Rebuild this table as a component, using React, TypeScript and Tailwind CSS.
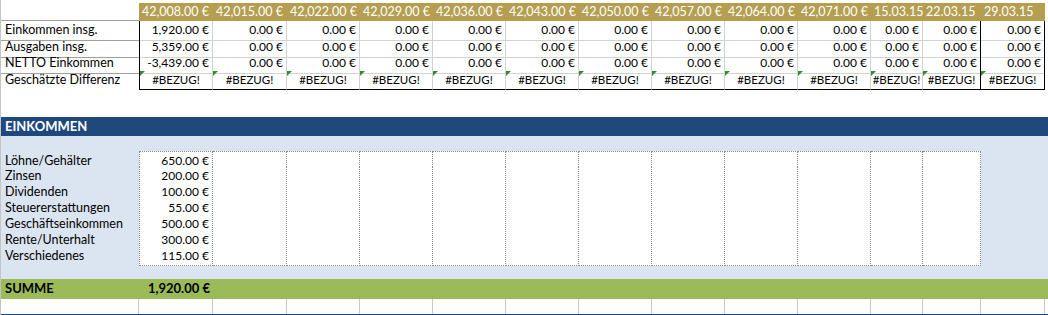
import React from "react";

const COLS =
  "grid grid-cols-[138px_74px_74px_73px_73px_73px_73px_73px_73px_73px_73px_52px_58px_64px]";

const headers = [
  "42,008.00 €",
  "42,015.00 €",
  "42,022.00 €",
  "42,029.00 €",
  "42,036.00 €",
  "42,043.00 €",
  "42,050.00 €",
  "42,057.00 €",
  "42,064.00 €",
  "42,071.00 €",
  "15.03.15",
  "22.03.15",
  "29.03.15",
];

const summary = [
  { label: "Einkommen insg.", first: "1,920.00 €", h: "h-[17px]" },
  { label: "Ausgaben insg.", first: "5,359.00 €", h: "h-[16px]" },
  { label: "NETTO Einkommen", first: "-3,439.00 €", h: "h-[17px]" },
];

const income = [
  ["Löhne/Gehälter", "650.00 €"],
  ["Zinsen", "200.00 €"],
  ["Dividenden", "100.00 €"],
  ["Steuererstattungen", "55.00 €"],
  ["Geschäftseinkommen", "500.00 €"],
  ["Rente/Unterhalt", "300.00 €"],
  ["Verschiedenes", "115.00 €"],
];

const Triangle = () => (
  <span className="absolute top-0 left-0 w-0 h-0 border-t-[5px] border-t-[#2f8f2f] border-r-[5px] border-r-transparent" />
);

export default function App() {
  return (
    <div className="w-[1048px] h-[315px] overflow-hidden bg-white border-l border-[#c4c4c4] font-['Lato',sans-serif] text-[12.5px] text-black">
      <div className="h-[3px]" />

      {/* date header */}
      <div className={`${COLS} h-[18px]`}>
        <div className="border-b border-[#a0a0a0]" />
        {headers.map((h) => (
          <div
            key={h}
            className="bg-[#b59e50] text-white text-[12.5px] leading-[18px] pl-[3px] whitespace-nowrap overflow-hidden"
          >
            {h}
          </div>
        ))}
      </div>

      {/* summary rows */}
      {summary.map((row) => (
        <div key={row.label} className={`${COLS} ${row.h}`}>
          <div className="border-b border-[#a0a0a0] pl-[4px] flex items-center whitespace-nowrap">
            {row.label}
          </div>
          {headers.map((_, i) => (
            <div
              key={i}
              className={`flex items-center justify-end pr-[3px] text-[12px] border-b border-[#d2d2d2] ${
                i === 0 ? "border-l border-l-black" : ""
              } ${i === 11 || i === 12 ? "border-r border-r-black" : "border-r border-r-[#d2d2d2]"}`}
            >
              {i === 0 ? row.first : "0.00 €"}
            </div>
          ))}
        </div>
      ))}
      <div className={`${COLS} h-[16px]`}>
        <div className="pl-[4px] flex items-center whitespace-nowrap">
          Geschätzte Differenz
        </div>
        {headers.map((_, i) => (
          <div
            key={i}
            className={`relative flex items-center justify-center whitespace-nowrap text-[11.5px] border-b border-b-black ${
              i === 0 ? "border-l border-l-black" : ""
            } ${i === 11 || i === 12 ? "border-r border-r-black" : "border-r border-r-[#d2d2d2]"}`}
          >
            <Triangle />
            #BEZUG!
          </div>
        ))}
      </div>

      <div className="h-[30px]" />

      {/* income section */}
      <div className="h-[19px] bg-[#1f497d] text-white font-bold text-[13px] leading-[19px] pl-[4px]">
        EINKOMMEN
      </div>
      <div className="bg-[#dbe5f1] pt-[15px] pb-[16px]">
        {income.map(([label, value], r) => (
          <div key={label} className={`${COLS} h-[16px]`}>
            <div className="pl-[4px] flex items-center whitespace-nowrap">{label}</div>
            {headers.slice(0, 12).map((_, i) => (
              <div
                key={i}
                className={`bg-white flex items-center justify-end pr-[3px] text-[12px] border-r border-b border-dotted border-[#8a8a8a] ${
                  i === 0 ? "border-l" : ""
                } ${r === 0 ? "border-t" : ""}`}
              >
                {i === 0 ? value : ""}
              </div>
            ))}
          </div>
        ))}
      </div>

      {/* total */}
      <div className={`${COLS} h-[20px] bg-[#9bbb59] font-bold text-[13px]`}>
        <div className="pl-[4px] flex items-center">SUMME</div>
        <div className="flex items-center justify-end pr-[3px]">1,920.00 €</div>
      </div>
      <div className={`${COLS} h-[15px]`}>
        {[...Array(14)].map((_, i) => (
          <div key={i} className="border-r border-[#c8c8c8]" />
        ))}
      </div>
      <div className="h-[1px] bg-[#1f497d]" />
    </div>
  );
}
